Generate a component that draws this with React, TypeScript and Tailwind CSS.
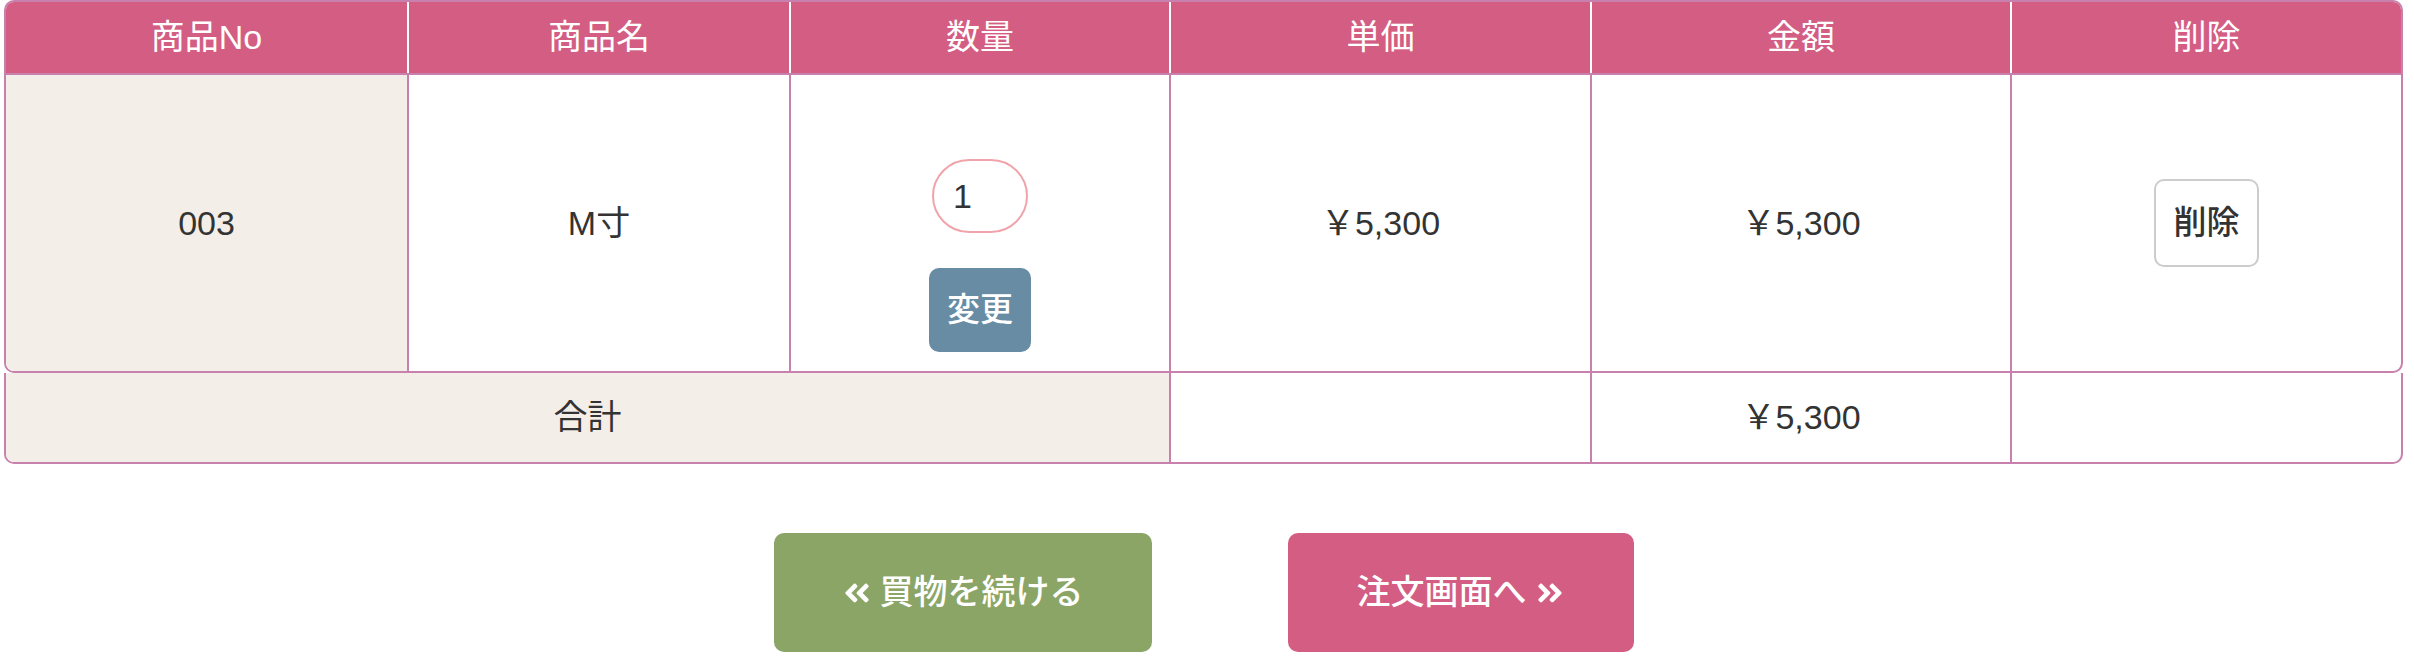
import React from "react";
import { FaAngleDoubleLeft, FaAngleDoubleRight } from "react-icons/fa";

const cols = "grid grid-cols-[401px_382px_380px_421px_420px_391px]";

export default function App() {
  return (
    <div className="w-[2414px] h-[670px] bg-white font-['Liberation_Sans','Noto_Sans_CJK_JP',sans-serif] text-[#333333]">
      <div className="pl-[4px] w-[2403px]">
        {/* main table */}
        <div className="w-[2399px] border-2 border-[#c880ad] rounded-[10px] overflow-hidden">
          <div className={`${cols} h-[73px] bg-[#d35d83] border-b-2 border-[#c880ad] text-white text-[34px]`}>
            {["商品No", "商品名", "数量", "単価", "金額", "削除"].map((h, i) => (
              <div
                key={h}
                className={`flex items-center justify-center ${i > 0 ? "border-l-2 border-white" : ""}`}
              >
                {h}
              </div>
            ))}
          </div>
          <div className={`${cols} h-[296px] text-[34px]`}>
            <div className="flex items-center justify-center bg-[#f3eee8]">003</div>
            <div className="flex items-center justify-center border-l-2 border-[#c880ad]">M寸</div>
            <div className="flex flex-col items-center pt-[84px] gap-[35px] border-l-2 border-[#c880ad]">
              <div className="w-[96px] h-[74px] rounded-full border-2 border-[#f0a3aa] flex items-center pl-[19px] text-[34px]">
                1
              </div>
              <button className="w-[102px] h-[84px] rounded-[10px] bg-[#688ca4] text-white text-[33px] font-medium flex items-center justify-center">
                変更
              </button>
            </div>
            <div className="flex items-center justify-center border-l-2 border-[#c880ad]">￥5,300</div>
            <div className="flex items-center justify-center border-l-2 border-[#c880ad]">￥5,300</div>
            <div className="flex items-center justify-center border-l-2 border-[#c880ad]">
              <button className="w-[105px] h-[88px] rounded-[10px] border-2 border-[#cccccc] bg-white text-[33px] font-medium text-[#333333] flex items-center justify-center">
                削除
              </button>
            </div>
          </div>
        </div>
        {/* total row */}
        <div className="w-[2399px] border-2 border-t-0 border-[#c880ad] rounded-b-[10px] overflow-hidden">
          <div className="grid grid-cols-[1163px_421px_420px_391px] h-[89px] text-[34px]">
            <div className="flex items-center justify-center bg-[#f3eee8]">合計</div>
            <div className="border-l-2 border-[#c880ad]"></div>
            <div className="flex items-center justify-center border-l-2 border-[#c880ad]">￥5,300</div>
            <div className="border-l-2 border-[#c880ad]"></div>
          </div>
        </div>
        {/* buttons */}
        <div className="flex justify-center gap-[136px] mt-[69px] w-[2399px]">
          <button className="w-[378px] h-[119px] rounded-[10px] bg-[#8ba567] text-white text-[34px] font-medium flex items-center justify-center gap-[8px]">
            <FaAngleDoubleLeft className="w-[30px] h-[30px]" />
            <span>買物を続ける</span>
          </button>
          <button className="w-[346px] h-[119px] rounded-[10px] bg-[#d35d83] text-white text-[34px] font-medium flex items-center justify-center gap-[8px]">
            <span>注文画面へ</span>
            <FaAngleDoubleRight className="w-[30px] h-[30px]" />
          </button>
        </div>
      </div>
    </div>
  );
}
